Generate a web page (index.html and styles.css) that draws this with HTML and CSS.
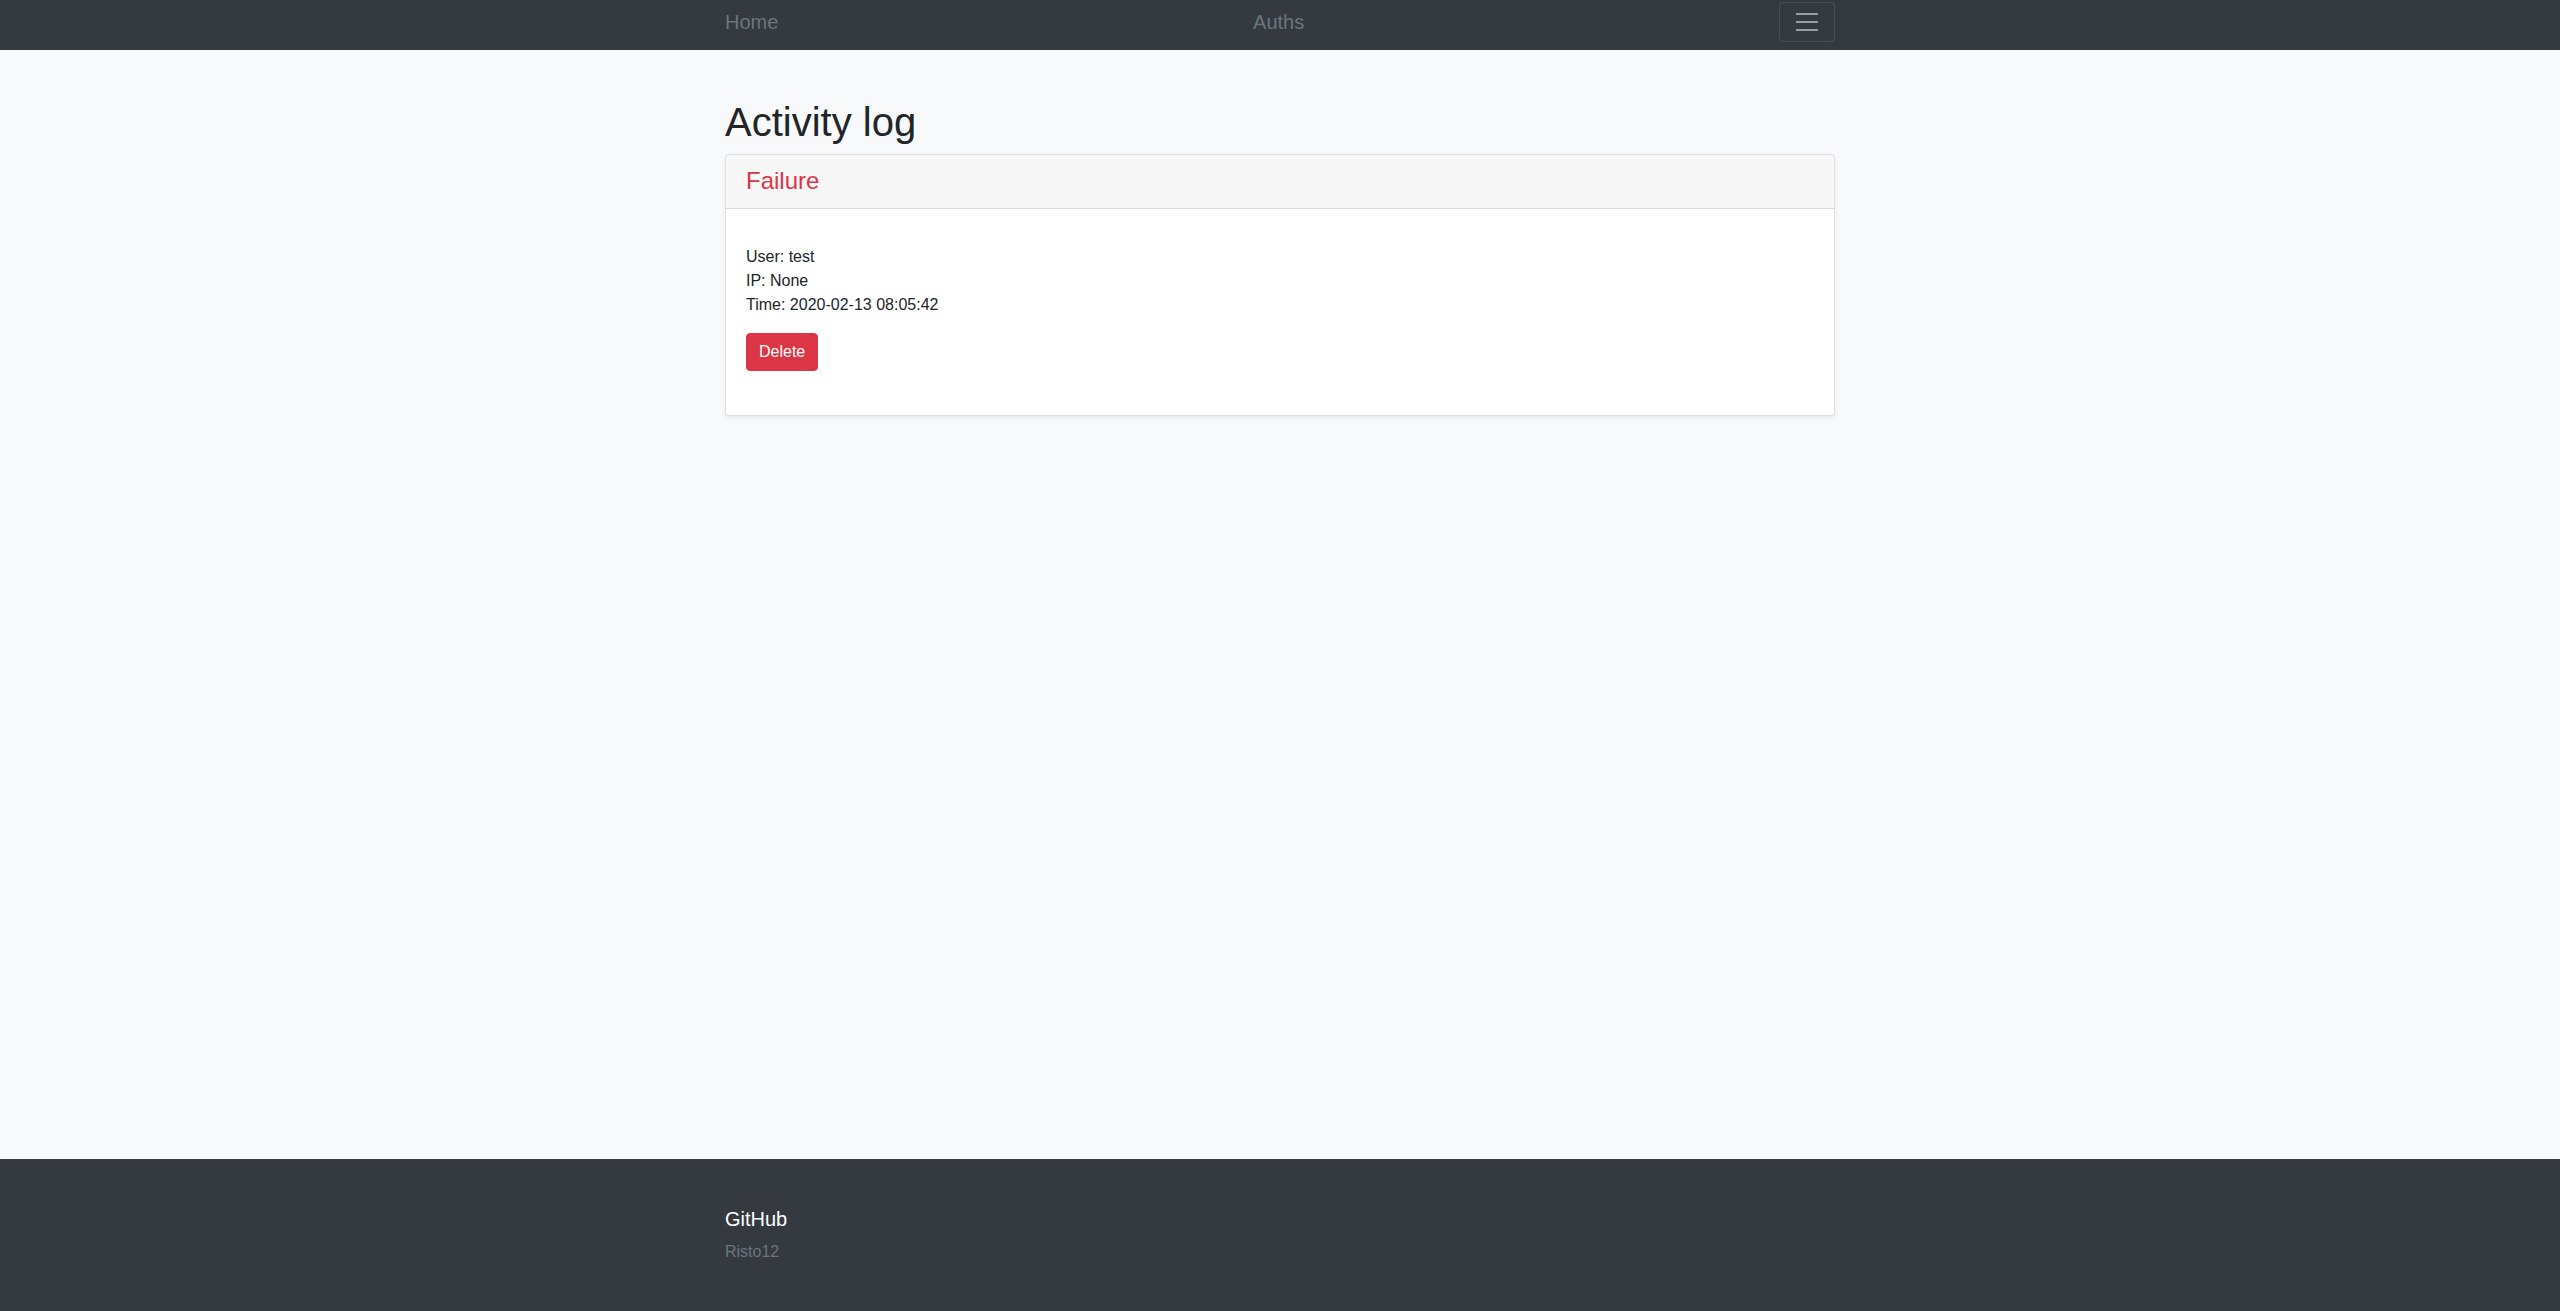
FILE: index.html
```html
<!DOCTYPE html>
<html lang="en">
<head>
<meta charset="utf-8">
<title>Activity log</title>
<link rel="stylesheet" href="styles.css">
</head>
<body>
<header class="navbar">
  <div class="container nav-inner">
    <a class="nav-link" href="#">Home</a>
    <a class="nav-link" href="#">Auths</a>
    <button class="toggler" type="button" aria-label="Toggle navigation">
      <svg class="toggler-icon" viewBox="0 0 30 30" width="30" height="30">
        <path d="M4 7h22M4 15h22M4 23h22" stroke="rgba(255,255,255,0.5)" stroke-width="2" stroke-linecap="butt" fill="none"/>
      </svg>
    </button>
  </div>
</header>
<main class="main">
  <div class="container">
    <h1 class="page-title">Activity log</h1>
    <div class="card">
      <div class="card-header">
        <h4 class="card-status">Failure</h4>
      </div>
      <div class="card-body">
        <p class="card-text">User: test<br>IP: None<br>Time: 2020-02-13 08:05:42</p>
        <form class="delete-form">
          <button class="btn-danger" type="button">Delete</button>
        </form>
      </div>
    </div>
  </div>
</main>
<footer class="footer">
  <div class="container">
    <h5 class="footer-title">GitHub</h5>
    <div class="footer-sub">Risto12</div>
  </div>
</footer>
</body>
</html>
```

FILE: styles.css
```css
* { box-sizing: border-box; }
html, body { margin: 0; padding: 0; }
body {
  font-family: "Liberation Sans", Arial, sans-serif;
  font-size: 16px;
  line-height: 1.5;
  color: #212529;
  background: #f8f9fa;
  min-height: 100vh;
  display: flex;
  flex-direction: column;
}
.container {
  width: 1110px;
  margin: 0 auto;
}
.navbar {
  background: #343a40;
  height: 50px;
}
.nav-inner {
  display: flex;
  justify-content: space-between;
  align-items: flex-start;
}
.nav-link {
  display: block;
  padding-top: 7px;
  font-size: 20px;
  line-height: 30px;
  color: #6c757d;
  text-decoration: none;
}
.toggler {
  margin-top: 2px;
  width: 56px;
  height: 40px;
  padding: 4px 12px;
  background: transparent;
  border: 1px solid rgba(255,255,255,0.1);
  border-radius: 4px;
  display: flex;
  align-items: center;
  justify-content: center;
}
.toggler-icon { display: block; }
.main {
  flex: 1;
  padding-top: 48px;
}
.page-title {
  margin: 0 0 8px 0;
  font-size: 40px;
  line-height: 48px;
  font-weight: 400;
  color: #212529;
}
.card {
  background: #fff;
  border: 1px solid rgba(0,0,0,0.125);
  border-radius: 4px;
  box-shadow: 0 2px 4px rgba(0,0,0,0.075);
}
.card-header {
  background: rgba(0,0,0,0.03);
  border-bottom: 1px solid rgba(0,0,0,0.125);
  padding: 12px 20px;
  border-radius: 3px 3px 0 0;
}
.card-status {
  margin: 0;
  font-size: 24px;
  line-height: 28.8px;
  font-weight: 400;
  color: #dc3545;
}
.card-body {
  padding: 20px;
}
.card-text {
  margin: 16px 0 16px 0;
}
.delete-form {
  margin: 0 0 24px 0;
}
.btn-danger {
  font-family: "Liberation Sans", Arial, sans-serif;
  font-size: 16px;
  line-height: 24px;
  padding: 6px 12px;
  color: #fff;
  background: #dc3545;
  border: 1px solid #dc3545;
  border-radius: 4px;
  display: inline-block;
}
.footer {
  background: #343a40;
  padding: 48px 0 47px;
}
.footer-title {
  margin: 0 0 9px 0;
  font-size: 20px;
  line-height: 24px;
  font-weight: 400;
  color: #fff;
}
.footer-sub {
  font-size: 16px;
  line-height: 24px;
  color: #6c757d;
}
```
